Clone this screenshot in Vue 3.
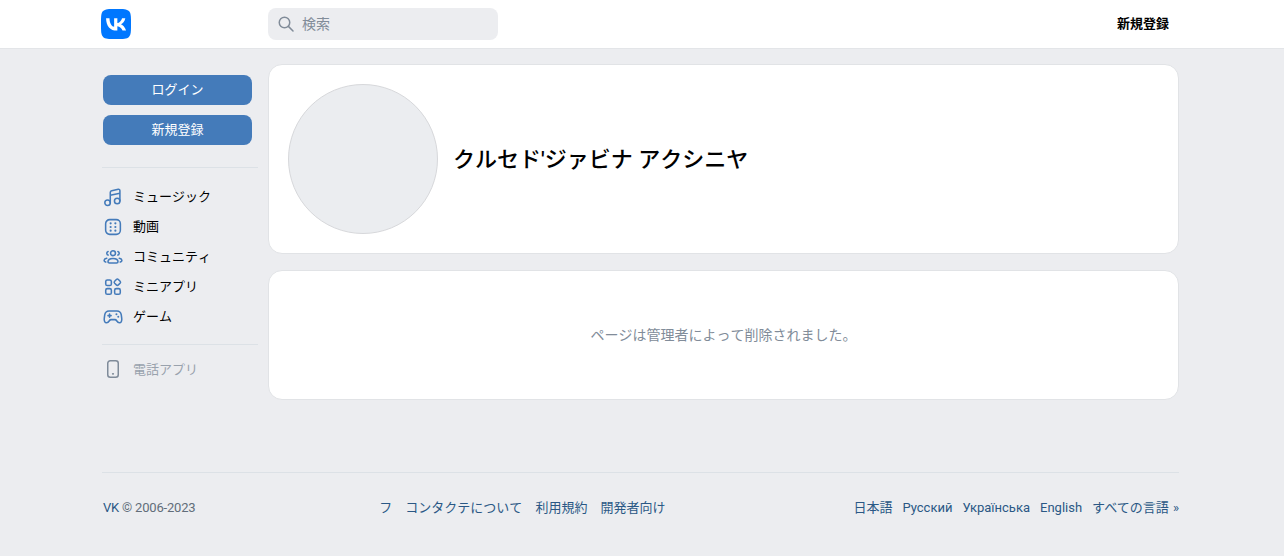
<script setup>
const menu = [
  { label: 'ミュージック', icon: 'music' },
  { label: '動画', icon: 'video' },
  { label: 'コミュニティ', icon: 'groups' },
  { label: 'ミニアプリ', icon: 'apps' },
  { label: 'ゲーム', icon: 'game' }
]

const footerLinks = ['フ', 'コンタクテについて', '利用規約', '開発者向け']
const languages = ['日本語', 'Русский', 'Українська', 'English', 'すべての言語 »']
</script>

<template>
  <div class="page">
    <header class="top">
      <div class="top-inner">
        <a class="logo">
          <svg width="30" height="30" viewBox="0 0 48 48">
            <path fill="#07f" d="M0 23.04C0 12.18 0 6.75 3.37 3.37 6.75 0 12.18 0 23.04 0h1.92c10.86 0 16.29 0 19.67 3.37C48 6.75 48 12.18 48 23.04v1.92c0 10.86 0 16.29-3.37 19.67C41.25 48 35.82 48 24.96 48h-1.92c-10.86 0-16.29 0-19.67-3.37C0 41.25 0 35.82 0 24.96z" />
            <path fill="#fff" d="M25.54 34.58c-10.94 0-17.18-7.5-17.44-19.98h5.48c.18 9.16 4.22 13.04 7.42 13.84V14.6h5.16v7.9c3.16-.34 6.48-3.94 7.6-7.9h5.16c-.86 4.88-4.46 8.48-7.02 9.96 2.56 1.2 6.66 4.34 8.22 10.02h-5.68c-1.22-3.8-4.26-6.74-8.28-7.14v7.14z" />
          </svg>
        </a>
        <div class="search">
          <svg width="16" height="16" viewBox="0 0 16 16" fill="none" stroke="#818c99" stroke-width="1.5" stroke-linecap="round">
            <circle cx="6.5" cy="6.5" r="5.25" />
            <path d="M10.4 10.4l4.6 4.6" />
          </svg>
          <span>検索</span>
        </div>
        <a class="signup">新規登録</a>
      </div>
    </header>

    <div class="body">
      <aside class="side">
        <div class="auth">
          <button class="btn">ログイン</button>
          <button class="btn">新規登録</button>
        </div>
        <nav class="menu">
          <a v-for="item in menu" :key="item.label" class="row">
            <svg class="ico" width="20" height="20" viewBox="0 0 22 22" fill="none" stroke="#447bba" stroke-width="1.7" stroke-linecap="round" stroke-linejoin="round">
              <template v-if="item.icon === 'music'">
                <circle cx="5" cy="17.400" r="3" />
                <circle cx="15.600" cy="15.400" r="3" />
                <path d="M8 17.400V6c0-1.100.6-1.800 1.600-2l7.200-1.500c1.100-.2 1.800.4 1.800 1.500v11.400M8 9.200l10.600-2.200" />
              </template>
              <template v-else-if="item.icon === 'video'">
                <rect x="2.900" y="2.900" width="16.200" height="16.200" rx="4.500" />
                <g fill="#447bba" stroke="none">
                  <circle cx="8.400" cy="7" r="1.200" /><circle cx="13.600" cy="7" r="1.200" />
                  <circle cx="8.400" cy="11" r="1.200" /><circle cx="13.600" cy="11" r="1.200" />
                  <circle cx="8.400" cy="15" r="1.200" /><circle cx="13.600" cy="15" r="1.200" />
                </g>
              </template>
              <template v-else-if="item.icon === 'groups'">
                <circle cx="11" cy="6.800" r="2.700" />
                <path d="M5.500 16.200c0-2.300 2.400-3.600 5.500-3.600s5.500 1.300 5.500 3.600c0 1-.7 1.300-1.600 1.300H7.100c-.9 0-1.600-.3-1.600-1.300z" />
                <path d="M5.600 4.900a2.100 2.100 0 0 0 0 4M16.400 4.900a2.100 2.100 0 0 1 0 4M3 16.600C1.700 16.300 1.100 15.600 1.300 14.500c.2-1.200 1.300-2 2.800-2.200M19 16.600c1.300-.3 1.900-1 1.700-2.100-.2-1.200-1.300-2-2.800-2.200" />
              </template>
              <template v-else-if="item.icon === 'apps'">
                <rect x="3" y="3.200" width="6.200" height="6.200" rx="1.800" />
                <rect x="3" y="12.800" width="6.200" height="6.200" rx="1.800" />
                <rect x="12.800" y="12.800" width="6.200" height="6.200" rx="1.800" />
                <path d="M14.700 2.700a1.600 1.600 0 0 1 2.200 0l1.900 1.900a1.600 1.600 0 0 1 0 2.200l-1.900 1.900a1.600 1.600 0 0 1-2.200 0l-1.900-1.900a1.600 1.600 0 0 1 0-2.200z" />
              </template>
              <template v-else-if="item.icon === 'game'">
                <path d="M6.600 4.400h8.800c2.600 0 4.200 1.600 4.700 4.300l.5 3.700c.4 2.900-.7 5-2.600 5-1.400 0-2.200-1-3-2.300-.5-.8-1-1.200-1.900-1.200H8.900c-.9 0-1.400.4-1.900 1.200-.8 1.300-1.600 2.300-3 2.300-1.900 0-3-2.100-2.600-5l.5-3.700c.5-2.700 2.100-4.300 4.700-4.300z" />
                <path d="M5.500 9.500h3.400M7.200 7.800v3.400" />
                <circle cx="14.800" cy="8" r="1.100" fill="#447bba" stroke="none" />
                <circle cx="16.800" cy="10.800" r="1.100" fill="#447bba" stroke="none" />
              </template>
            </svg>
            <span>{{ item.label }}</span>
          </a>
        </nav>
        <a class="row phone">
          <svg class="ico" width="20" height="22" viewBox="0 0 20 22" fill="none" stroke="#7f8b99" stroke-width="1.500" stroke-linecap="round">
            <rect x="4.750" y="1.750" width="10.500" height="16.500" rx="2.500" />
            <path d="M9.800 14.800h.4" stroke-width="1.800" />
          </svg>
          <span>電話アプリ</span>
        </a>
      </aside>

      <main class="main">
        <section class="card profile">
          <div class="avatar"></div>
          <h1 class="name">クルセド'ジァビナ アクシニヤ</h1>
        </section>
        <section class="card notice">ページは管理者によって削除されました。</section>
      </main>
    </div>

    <footer class="foot">
      <div class="copy"><a>VK</a> © 2006-2023</div>
      <div class="links">
        <a v-for="link in footerLinks" :key="link">{{ link }}</a>
      </div>
      <div class="langs">
        <a v-for="lang in languages" :key="lang">{{ lang }}</a>
      </div>
    </footer>
  </div>
</template>

<style>
html,
body {
  margin: 0;
  background: #ecedf0;
}
</style>

<style scoped>
.page {
  height: 556px;
  overflow: hidden;
  background: #ecedf0;
  font-family: Roboto, "Noto Sans CJK JP", sans-serif;
  font-size: 13px;
  line-height: 18px;
  color: #000;
}

.top {
  height: 48px;
  background: #fff;
  border-bottom: 1px solid #e3e5e8;
}

.top-inner {
  width: 1078px;
  margin-left: 101px;
  height: 48px;
  display: flex;
  align-items: center;
}

.logo {
  display: flex;
  width: 30px;
  height: 30px;
}

.search {
  margin-left: 137px;
  width: 230px;
  height: 32px;
  box-sizing: border-box;
  padding-left: 10px;
  display: flex;
  align-items: center;
  gap: 8px;
  border-radius: 8px;
  background: #ecedf0;
  color: #818c99;
  font-size: 14px;
}

.signup {
  margin-left: auto;
  margin-right: 10px;
  font-weight: 700;
}

.body {
  width: 1077px;
  margin: 15px 0 0 102px;
  display: flex;
  gap: 10px;
  height: 336px;
}

.side {
  width: 156px;
  flex: none;
}

.auth {
  padding: 11px 0 22px 1px;
  border-bottom: 1px solid #dce1e6;
  display: flex;
  flex-direction: column;
  gap: 10px;
}

.btn {
  width: 149px;
  height: 30px;
  border: 0;
  padding: 0;
  border-radius: 8px;
  background: #447bba;
  color: #fff;
  font: inherit;
}

.menu {
  padding: 14px 0 12px;
  border-bottom: 1px solid #dce1e6;
  font-kerning: none;
}

.row {
  height: 30px;
  display: flex;
  align-items: center;
  gap: 10px;
  padding-left: 1px;
}

.ico {
  flex: none;
}

.phone {
  margin-top: 10px;
  color: #99a2ad;
}

.main {
  flex: 1;
  display: flex;
  flex-direction: column;
  gap: 16px;
}

.card {
  background: #fff;
  border: 1px solid #e1e3e6;
  border-radius: 14px;
  box-sizing: border-box;
}

.profile {
  height: 190px;
  padding-left: 19px;
  display: flex;
  align-items: center;
  gap: 15px;
}

.avatar {
  width: 150px;
  height: 150px;
  box-sizing: border-box;
  border: 1px solid #d7d8db;
  border-radius: 50%;
  background: #ebedf0;
}

.name {
  margin: 1px 0 0;
  font-size: 22px;
  font-weight: 500;
  line-height: 28px;
  font-kerning: none;
}

.notice {
  height: 130px;
  display: flex;
  align-items: center;
  justify-content: center;
  color: #818c99;
  font-size: 14px;
  font-kerning: none;
}

.foot {
  width: 1077px;
  margin: 72px 0 0 102px;
  height: 70px;
  box-sizing: border-box;
  border-top: 1px solid #dce1e6;
  padding: 0 0 0 1px;
  display: flex;
  align-items: center;
  justify-content: space-between;
  color: #626d7a;
}

.foot a {
  color: #2a5885;
}

.copy {
  letter-spacing: -0.2px;
}

.links {
  display: flex;
  gap: 13px;
  margin-right: 4px;
  font-kerning: none;
}

.langs {
  display: flex;
  gap: 10px;
}

.langs a:last-child {
  word-spacing: 1px;
}
</style>
